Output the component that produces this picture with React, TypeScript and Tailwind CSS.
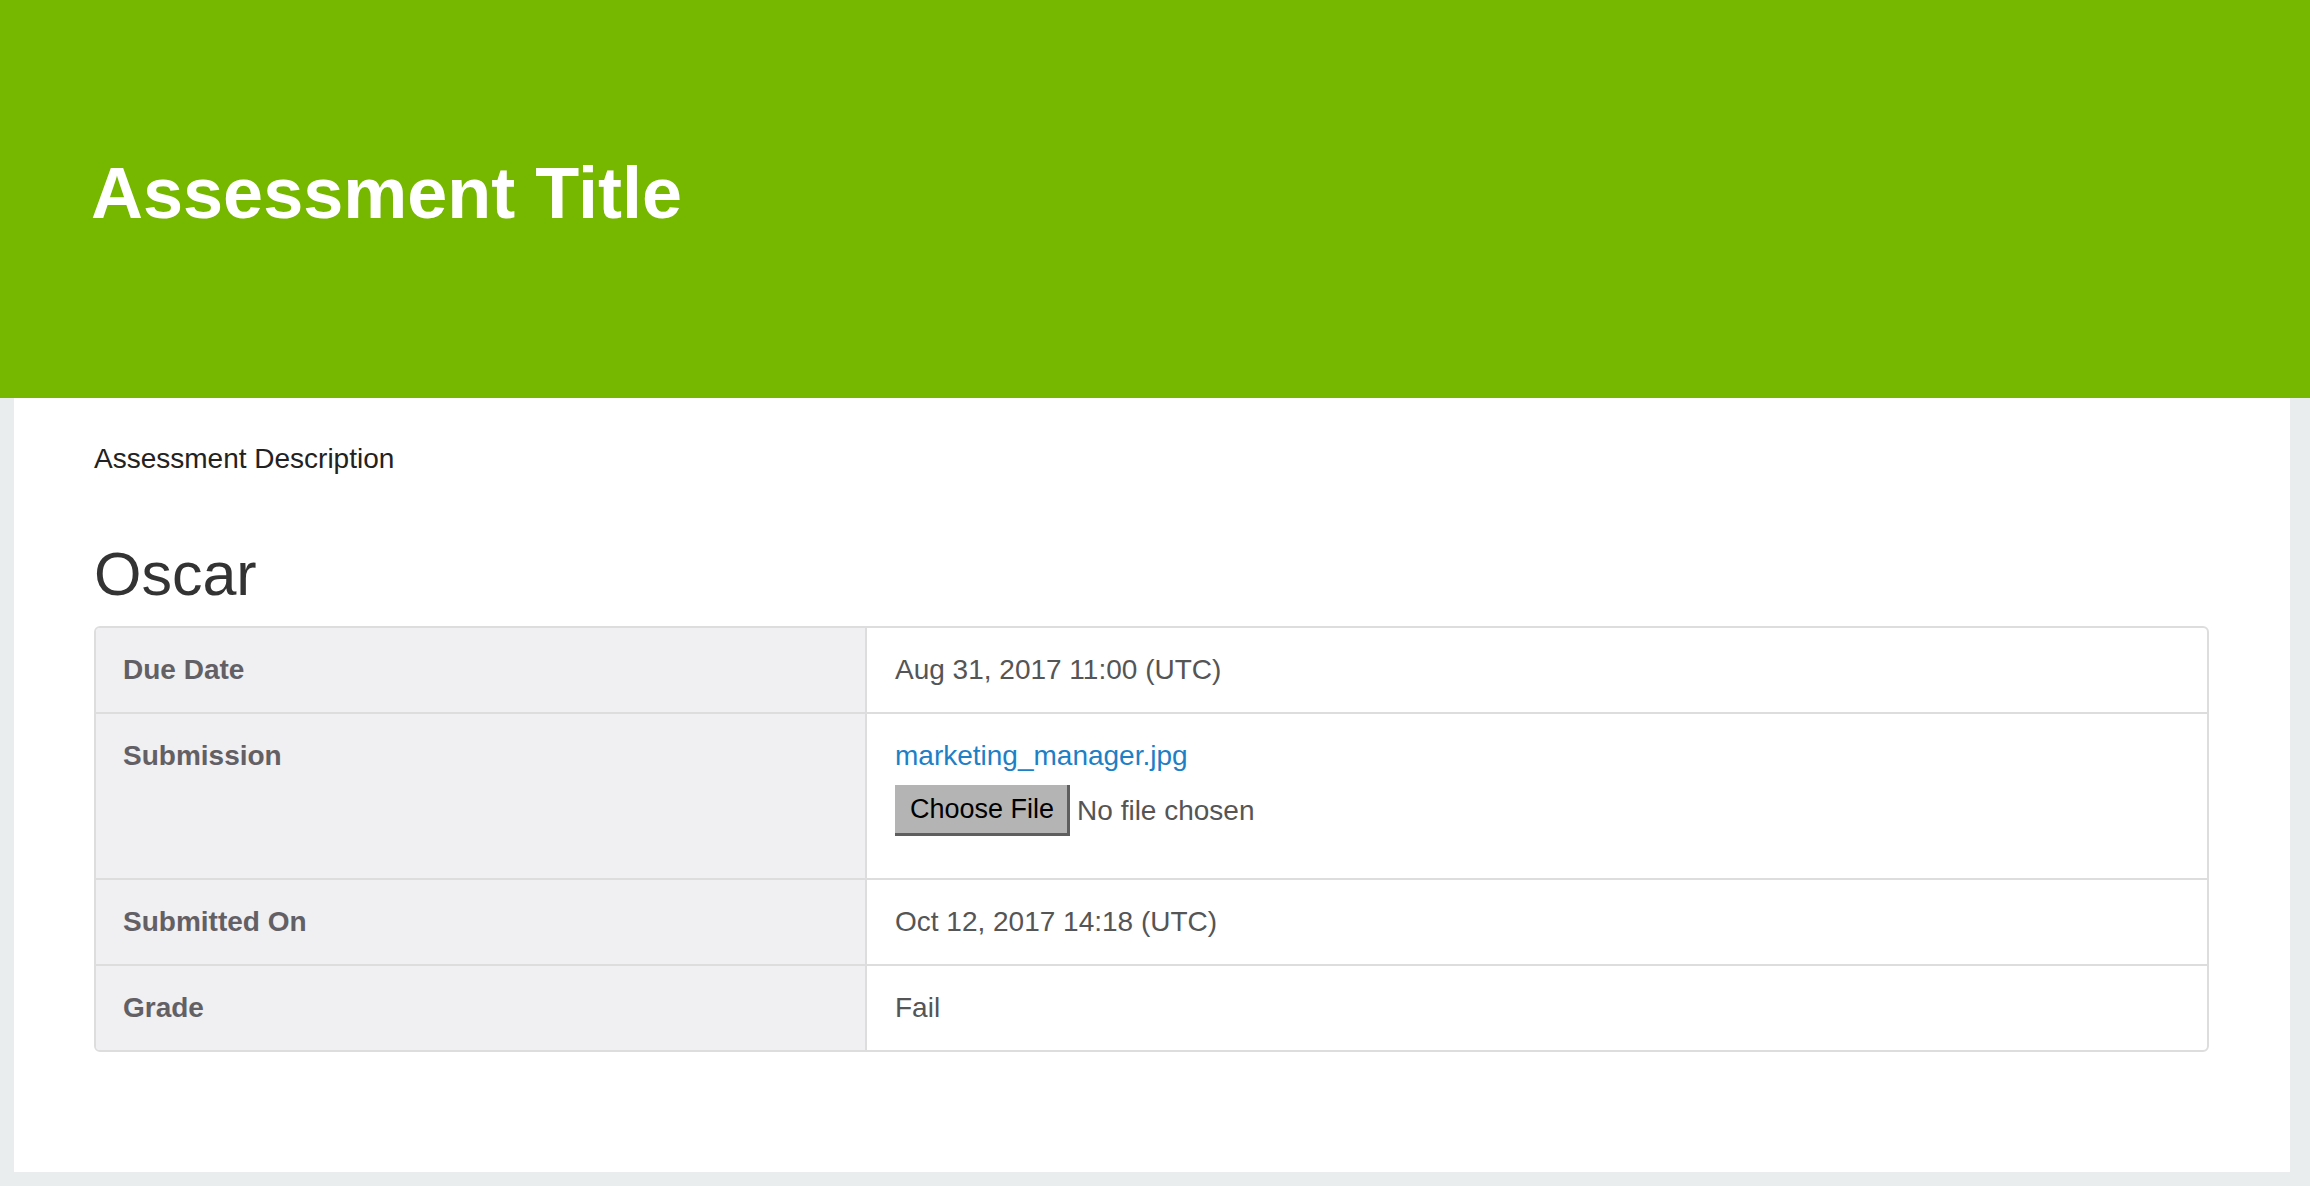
import React from "react";

const rows: { label: string; value: React.ReactNode }[] = [
  { label: "Due Date", value: "Aug 31, 2017 11:00 (UTC)" },
  {
    label: "Submission",
    value: (
      <div className="flex flex-col">
        <a href="#" className="h-[40px] leading-[40px] text-[#1d80c6] no-underline">
          marketing_manager.jpg
        </a>
        <div className="mt-[9px] mb-[20px] flex items-center">
          <span className="inline-flex h-[51px] items-center bg-[#b4b4b4] pl-[15px] pr-[13px] text-[27px] text-black border-r-[3px] border-b-[3px] border-r-[#5e5e5e] border-b-[#5e5e5e] leading-none">
            Choose File
          </span>
          <span className="ml-[7px] text-[#555]">No file chosen</span>
        </div>
      </div>
    ),
  },
  { label: "Submitted On", value: "Oct 12, 2017 14:18 (UTC)" },
  { label: "Grade", value: "Fail" },
];

export default function App() {
  return (
    <div
      className="min-h-[1186px] w-full bg-[#e9eded] pb-[14px]"
      style={{ fontFamily: '"Liberation Sans", Arial, Helvetica, sans-serif' }}
    >
      <header className="h-[398px] w-full bg-[#76b700] pl-[91px] pt-[153px]">
        <h1 className="text-[72px] font-bold leading-[80px] text-white">Assessment Title</h1>
      </header>
      <main className="ml-[14px] mr-[20px] h-[774px] bg-white pl-[80px] pr-[81px] pt-[41px]">
        <p className="text-[28px] leading-[40px] text-[#222]">Assessment Description</p>
        <h2 className="mt-[62px] text-[61px] font-medium leading-[66px] text-[#333]">Oscar</h2>
        <div className="mt-[19px] overflow-hidden rounded-[6px] border-2 border-[#dddddd] text-[28px] leading-[40px]">
          {rows.map((r, i) => (
            <div key={r.label} className={`flex ${i > 0 ? "border-t-2 border-[#dddddd]" : ""}`}>
              <div className="w-[771px] shrink-0 border-r-2 border-[#dddddd] bg-[#f0eff1] px-[27px] py-[22px] font-bold text-[#626065]">
                {r.label}
              </div>
              <div className="flex-1 px-[28px] py-[22px] text-[#555]">{r.value}</div>
            </div>
          ))}
        </div>
      </main>
    </div>
  );
}
